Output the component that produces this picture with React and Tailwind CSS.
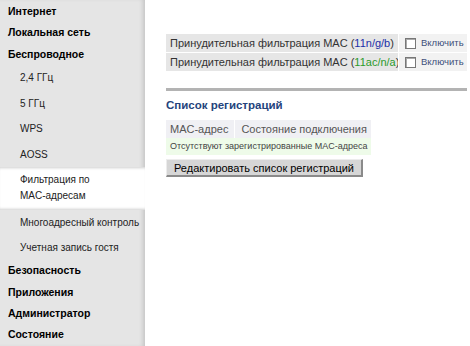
import React from "react";

const font = { fontFamily: '"Liberation Sans", Arial, sans-serif' };

const menu = [
  { label: "Интернет", top: true },
  { label: "Локальная сеть", top: true },
  { label: "Беспроводное", top: true },
  { label: "2,4 ГГц" },
  { label: "5 ГГц" },
  { label: "WPS" },
  { label: "AOSS" },
  { label: "Фильтрация по MAC-адресам", active: true },
  { label: "Многоадресный контроль" },
  { label: "Учетная запись гостя" },
  { label: "Безопасность", top: true },
  { label: "Приложения", top: true },
  { label: "Администратор", top: true },
  { label: "Состояние", top: true },
];

const Sidebar = () => {
  return (
    <div className="w-[145px] shrink-0 bg-[#e5e5e5] flex flex-col shadow-[inset_-4px_0_4px_-2px_#c4c4c4] pt-[1px]">
      {menu.map((item) => {
        if (item.top) {
          return (
            <div key={item.label} className="h-[22px] flex items-center pl-2 text-[10.5px] font-bold text-black whitespace-nowrap">
              {item.label}
            </div>
          );
        }
        if (item.active) {
          return (
            <div
              key={item.label}
              className="h-[44px] flex flex-col justify-center pl-5 bg-white text-[10px] leading-[16px] text-[#222] shadow-[inset_0_3px_3px_-2px_#cfcfcf,inset_0_-3px_3px_-2px_#cfcfcf] w-[145px]"
            >
              <span>Фильтрация по</span>
              <span>MAC-адресам</span>
            </div>
          );
        }
        return (
          <div key={item.label} className="h-[26px] flex items-center pl-5 text-[10px] text-[#222] whitespace-nowrap">
            {item.label}
          </div>
        );
      })}
    </div>
  );
};

const FilterRow = ({ band, color }) => (
  <div className="flex h-[18px] text-[11px] leading-[18px]">
    <div className="w-[232px] bg-[#e6e6e6] pl-1 text-[#333] whitespace-nowrap overflow-hidden">
      Принудительная фильтрация MAC (<span className={color}>{band}</span>)
    </div>
    <div className="flex-1 ml-[1px] bg-[#f2f2f2] flex items-center pl-[6px] gap-[5px] overflow-hidden">
      <span className="w-[11px] h-[11px] shrink-0 border border-[#777] bg-white shadow-[inset_1px_1px_0_#aaa]" />
      <span className="text-[9.5px] text-[#3d4f7a] whitespace-nowrap">Включить</span>
    </div>
  </div>
);

export default function App() {
  return (
    <div className="w-[470px] h-[346px] flex bg-white overflow-hidden" style={font}>
      <Sidebar />
      <div className="flex-1 pl-[21px] pr-[3px] pt-[34px]">
        <div className="flex flex-col gap-[1px]">
          <FilterRow band="11n/g/b" color="text-[#1b2fa8]" />
          <FilterRow band="11ac/n/a" color="text-[#2b9a2b]" />
        </div>
        <div className="mt-[17px] border-t-[3px] border-[#b3b3b3] pt-[6px]">
          <div className="text-[11.5px] font-bold text-[#24437c]">Список регистраций</div>
          <div className="mt-[6px] w-[205px] flex h-[18px] bg-[#f0f0f4] text-[11px] text-[#555] items-center whitespace-nowrap">
            <span className="pl-1 pr-[6px] border-r border-white h-full flex items-center">MAC-адрес</span>
            <span className="pl-[6px]">Состояние подключения</span>
          </div>
          <div className="w-[205px] h-[17px] bg-[#eefbe9] text-[9px] text-[#444] flex items-center pl-1 whitespace-nowrap">
            Отсутствуют зарегистрированные MAC-адреса
          </div>
          <button className="mt-[4px] h-[18px] px-[7px] bg-[#d6d6d6] text-[11px] text-black border-r-2 border-b-2 border-[#8a8a8a] border-t border-l border-t-[#ececec] border-l-[#ececec] flex items-center whitespace-nowrap">
            Редактировать список регистраций
          </button>
        </div>
      </div>
    </div>
  );
}
